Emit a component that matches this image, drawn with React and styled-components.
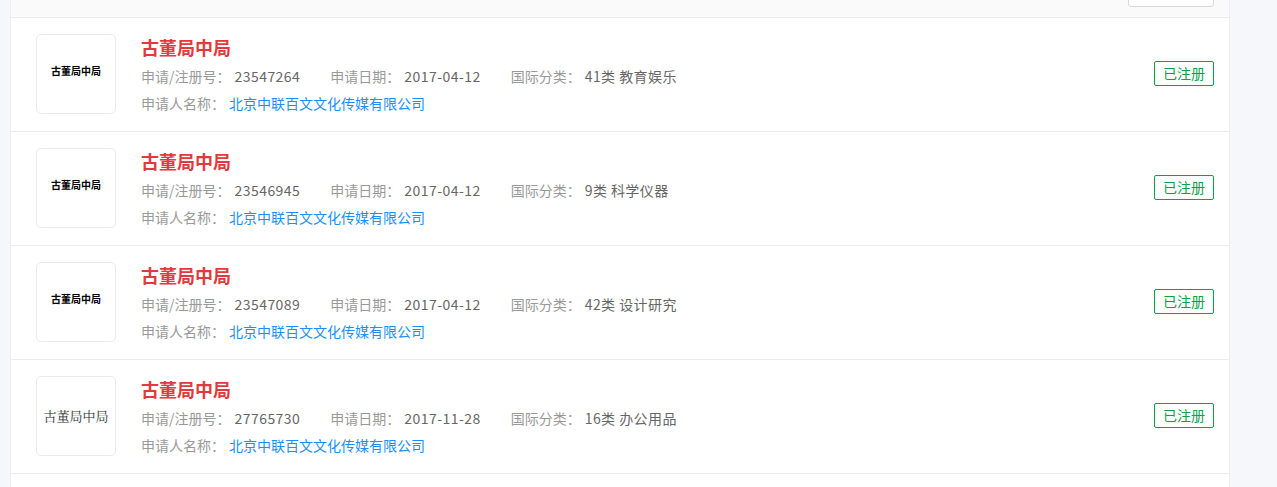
import React from "react";
import styled, { createGlobalStyle } from "styled-components";

const GlobalStyle = createGlobalStyle`
  html, body {
    margin: 0;
    padding: 0;
    background: #f7f8fc;
    font-family: "Noto Sans CJK SC", "Microsoft YaHei", sans-serif;
  }
  * { box-sizing: border-box; }
`;

const marks = [
  { no: "23547264", date: "2017-04-12", cls: "41类 教育娱乐", logo: "bold" },
  { no: "23546945", date: "2017-04-12", cls: "9类 科学仪器", logo: "bold" },
  { no: "23547089", date: "2017-04-12", cls: "42类 设计研究", logo: "bold" },
  { no: "27765730", date: "2017-11-28", cls: "16类 办公用品", logo: "serif" },
];

export default function App() {
  return (
    <Page>
      <GlobalStyle />
      <Panel>
        {/* 상단 툴바 (스크롤로 잘린 부분) */}
        <Toolbar>
          <GhostBtn type="button" />
        </Toolbar>

        {marks.map((m) => (
          <Row key={m.no}>
            <LogoBox>
              <LogoText $variant={m.logo}>古董局中局</LogoText>
            </LogoBox>
            <Info>
              <Title>古董局中局</Title>
              <Line>
                <Field>
                  <Label>申请/注册号：</Label>
                  <Value>{m.no}</Value>
                </Field>
                <Field>
                  <Label>申请日期：</Label>
                  <Value>{m.date}</Value>
                </Field>
                <Field>
                  <Label>国际分类：</Label>
                  <Value>{m.cls}</Value>
                </Field>
              </Line>
              <Line $second>
                <Label>申请人名称：</Label>
                <Link>北京中联百文文化传媒有限公司</Link>
              </Line>
            </Info>
            <Badge>已注册</Badge>
          </Row>
        ))}
      </Panel>
    </Page>
  );
}

const Page = styled.div`
  display: flex;
  min-height: 100vh;
  padding-left: 10px;
  background: #f5f7fa;
`;

const Panel = styled.div`
  width: 1220px;
  background: #fff;
  border-left: 1px solid #eeeeee;
  border-right: 1px solid #eeeeee;
`;

const Toolbar = styled.div`
  height: 18px;
  background: #fafafa;
  border-bottom: 1px solid #ebebeb;
  overflow: hidden;
  display: flex;
  justify-content: flex-end;
  align-items: flex-end;
  padding: 0 15px 10px 0;
`;

const GhostBtn = styled.button`
  width: 86px;
  height: 30px;
  flex-shrink: 0;
  background: #fff;
  border: 1px solid #d9d9d9;
  border-radius: 3px;
`;

const Row = styled.div`
  height: 114px;
  display: flex;
  align-items: flex-start;
  padding: 16px 15px 0 25px;
  border-bottom: 1px solid #ebebeb;
`;

const LogoBox = styled.div`
  width: 80px;
  height: 80px;
  flex-shrink: 0;
  border: 1px solid #eaeaea;
  border-radius: 5px;
  display: flex;
  align-items: center;
  justify-content: center;
`;

const LogoText = styled.span`
  color: ${(p) => (p.$variant === "serif" ? "#333" : "#000")};
  font-size: ${(p) => (p.$variant === "serif" ? "13px" : "10px")};
  font-weight: ${(p) => (p.$variant === "serif" ? 400 : 700)};
  font-family: ${(p) =>
    p.$variant === "serif"
      ? '"Noto Serif CJK SC", "Noto Sans CJK SC", serif'
      : '"Noto Sans CJK SC", sans-serif'};
  margin-top: ${(p) => (p.$variant === "serif" ? "-2px" : "-8px")};
`;

const Info = styled.div`
  flex: 1;
  margin-left: 25px;
  display: flex;
  flex-direction: column;
`;

const Title = styled.div`
  color: #e4393c;
  font-size: 18px;
  font-weight: 700;
  line-height: 27px;
`;

const Line = styled.div`
  display: flex;
  align-items: center;
  font-size: 14px;
  line-height: 26px;
  margin-top: ${(p) => (p.$second ? "1px" : "2px")};
`;

const Field = styled.span`
  display: inline-flex;
  margin-right: 30px;
`;

const Label = styled.span`
  color: #999;
`;

const Value = styled.span`
  color: #666;
  margin-left: 4px;
  letter-spacing: 0.45px;
`;

const Link = styled.a`
  color: #1890ff;
  margin-left: 4px;
  cursor: pointer;
`;

const Badge = styled.span`
  align-self: center;
  margin-top: -19px;
  flex-shrink: 0;
  width: 60px;
  height: 25px;
  border: 1px solid #07a24a;
  border-radius: 2px;
  color: #07a24a;
  font-size: 14px;
  line-height: 23px;
  text-align: center;
`;
